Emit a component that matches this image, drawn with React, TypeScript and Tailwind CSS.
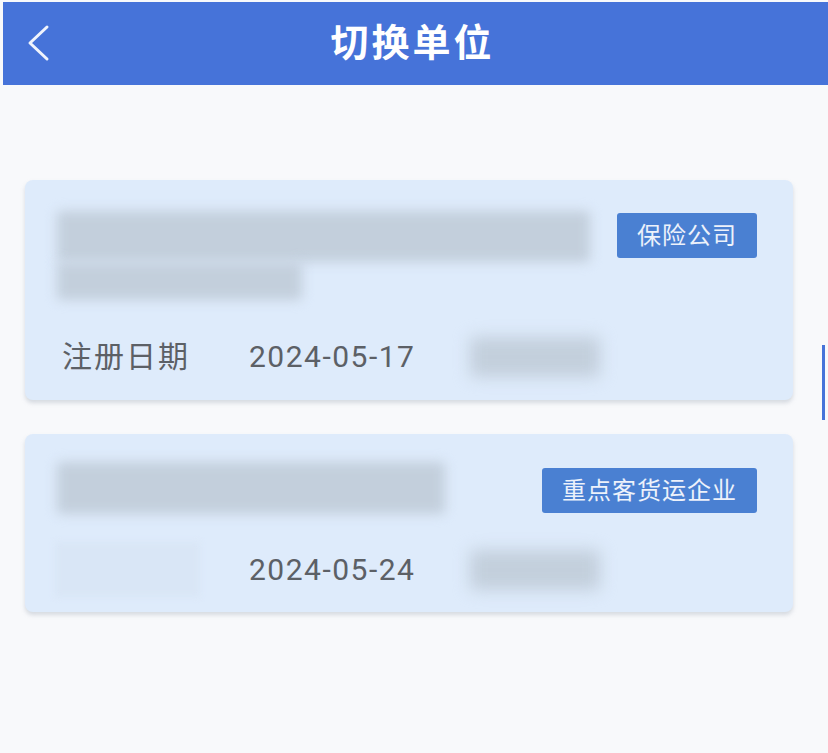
const FONT = 'Roboto, "Noto Sans CJK SC", "Noto Sans", sans-serif';

function Blur({ className }: { className: string }) {
  return <div className={`rounded-sm bg-[#c3cfdc] blur-[6px] ${className}`} />;
}

function Tag({ label }: { label: string }) {
  return (
    <span className="flex h-[45px] items-center rounded-[3px] bg-[#4a80d2] px-[20px] text-[24px] tracking-[1px] text-white/90">
      {label}
    </span>
  );
}

export default function App() {
  return (
    <div className="relative h-[753px] w-[828px] overflow-hidden bg-[#f8f9fb]" style={{ fontFamily: FONT }}>
      <header className="relative ml-[3px] mt-[2px] flex h-[83px] items-center justify-center bg-[#4673d9]">
        <svg className="absolute left-[22px] top-[22px]" width="26" height="38" viewBox="0 0 26 38" fill="none">
          <path d="M22 3 L5 19 L22 35" stroke="rgba(255,255,255,0.92)" strokeWidth="3" strokeLinecap="round" strokeLinejoin="round" />
        </svg>
        <h1 className="pr-[6px] text-[38px] font-bold tracking-[3px] text-white">切换单位</h1>
      </header>

      <div className="flex flex-col gap-[34px] pl-[25px] pr-[35px] pt-[95px]">
        <section className="h-[220px] rounded-[8px] bg-[#deebfb] shadow-[0_3px_4px_rgba(150,160,175,0.35)]">
          <div className="flex items-start justify-between pl-[32px] pr-[36px] pt-[31px]">
            <div className="flex flex-col">
              <Blur className="h-[51px] w-[533px]" />
              <Blur className="h-[38px] w-[245px]" />
            </div>
            <div className="pt-[2px]">
              <Tag label="保险公司" />
            </div>
          </div>
          <div className="flex items-center pl-[37px] pt-[34px] text-[30px] text-[#5c6066]">
            <span className="w-[187px] tracking-[2px]">注册日期</span>
            <span className="w-[221px] tracking-[1.5px]">2024-05-17</span>
            <Blur className="h-[40px] w-[130px] rounded-full blur-[8px]" />
          </div>
        </section>

        <section className="h-[178px] rounded-[8px] bg-[#deebfb] shadow-[0_3px_4px_rgba(150,160,175,0.35)]">
          <div className="flex items-start justify-between pl-[32px] pr-[36px] pt-[28px]">
            <Blur className="h-[52px] w-[388px]" />
            <div className="pt-[6px]">
              <Tag label="重点客货运企业" />
            </div>
          </div>
          <div className="flex items-center pt-[28px] text-[30px] text-[#5c6066]">
            <div className="ml-[30px] h-[55px] w-[145px] bg-[#d9e6f6] blur-[3px]" />
            <span className="ml-[49px] w-[221px] tracking-[1.5px]">2024-05-24</span>
            <Blur className="h-[40px] w-[130px] rounded-full blur-[8px]" />
          </div>
        </section>
      </div>

      <div className="absolute left-[822px] top-[345px] h-[75px] w-[3px] bg-[#4673d9]" />
    </div>
  );
}
